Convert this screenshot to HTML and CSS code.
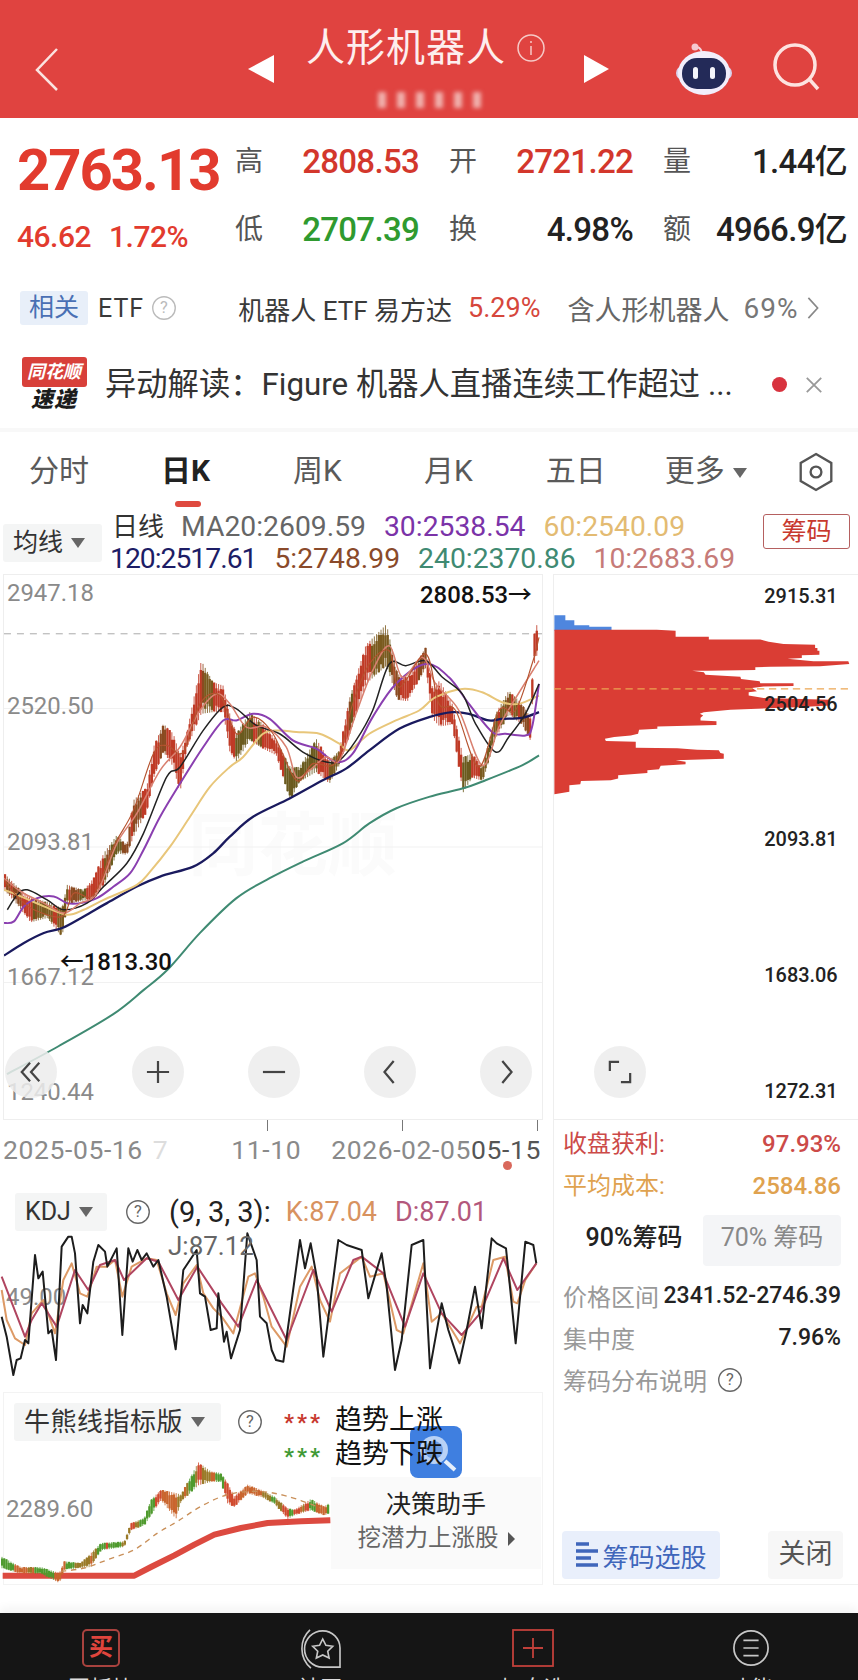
FILE: index.html
```html
<!DOCTYPE html>
<html lang="zh-CN">
  <head>
    <meta charset="UTF-8" />
    <meta name="viewport" content="width=device-width, initial-scale=1.0" />
    <title>人形机器人</title>
    <link rel="stylesheet" href="styles.css">
  </head>
  <body>
    <div class="screen">
      <header class="topbar">
        <svg class="back" viewBox="0 0 26 44"><path d="M23 2 3 23l20 20" /></svg>
        <span class="tri tri-left"></span>
        <div class="title-wrap">
          <div class="title-line">
            <span class="title">人形机器人</span>
            <svg class="info" viewBox="0 0 30 30"><circle cx="15" cy="15" r="13" /><path d="M15 13v9M15 8v2" /></svg>
          </div>
          <div class="blur-code"><i></i><i></i><i></i><i></i><i></i><i></i></div>
        </div>
        <span class="tri tri-right"></span>
        <svg class="robot" viewBox="0 0 60 54">
          <path class="antenna" d="M28 13c0-4-1-7-5-8" />
          <circle class="antenna-dot" cx="21" cy="5" r="3.5" />
          <rect class="ear" x="2" y="24" width="56" height="14" rx="7" />
          <ellipse class="head" cx="30" cy="31" rx="26" ry="22" />
          <rect class="visor" x="8" y="16" width="44" height="31" rx="15" />
          <rect class="eye" x="19" y="25" width="5" height="12" rx="2.5" />
          <rect class="eye" x="36" y="25" width="5" height="12" rx="2.5" />
        </svg>
        <svg class="search" viewBox="0 0 50 50"><circle cx="23" cy="23" r="20" /><path d="m38 38 8 9" /></svg>
      </header>

      <section class="quote">
        <div class="quote-price">
          <div class="price-big">2763.13</div>
          <div class="price-change"><span>46.62</span><span>1.72%</span></div>
        </div>
        <div class="quote-grid">
          <div class="cell"><span class="cell-label">高</span><span class="up">2808.53</span></div>
          <div class="cell"><span class="cell-label">开</span><span class="up">2721.22</span></div>
          <div class="cell"><span class="cell-label">量</span><span>1.44亿</span></div>
          <div class="cell"><span class="cell-label">低</span><span class="down">2707.39</span></div>
          <div class="cell"><span class="cell-label">换</span><span>4.98%</span></div>
          <div class="cell"><span class="cell-label">额</span><span>4966.9亿</span></div>
        </div>
      </section>

      <section class="etf-row">
        <span class="etf-tag">相关</span>
        <span class="etf-name">ETF</span>
        <svg class="help help-light" viewBox="0 0 30 30"><circle cx="15" cy="15" r="13" /><text x="15" y="21">?</text></svg>
        <span class="etf-fund">机器人 ETF 易方达</span>
        <span class="etf-pct">5.29%</span>
        <span class="etf-hold">含人形机器人</span>
        <span class="etf-hold-pct">69%</span>
        <svg class="etf-more" viewBox="0 0 14 26"><path d="m2 2 10 11L2 24" /></svg>
      </section>

      <section class="news-row">
        <div class="news-logo">
          <span class="logo-top">同花顺</span>
          <span class="logo-bottom">速递</span>
        </div>
        <p class="news-text">异动解读：Figure 机器人直播连续工作超过 ...</p>
        <span class="news-dot"></span>
        <svg class="news-close" viewBox="0 0 20 20"><path d="m2 2 16 16M18 2 2 18" /></svg>
      </section>

      <nav class="tabs">
        <span class="tab tab-1">分时</span>
        <span class="tab tab-2 tab-active">日K</span>
        <span class="tab tab-3">周K</span>
        <span class="tab tab-4">月K</span>
        <span class="tab tab-5">五日</span>
        <span class="tab tab-6">更多<i class="caret"></i></span>
        <svg class="hex" viewBox="0 0 40 44"><path d="M20 2 37 12v20L20 42 3 32V12z" /><circle cx="20" cy="22" r="6" /></svg>
      </nav>

      <section class="ma-row">
        <div class="select ma-select">均线<i class="caret"></i></div>
        <div class="ma-lines">
          <div class="ma-line">
            <span class="ma-day">日线</span>
            <span class="ma-20">MA20:2609.59</span>
            <span class="ma-30">30:2538.54</span>
            <span class="ma-60">60:2540.09</span>
          </div>
          <div class="ma-line ma-line-2">
            <span class="ma-120">120:2517.61</span>
            <span class="ma-5">5:2748.99</span>
            <span class="ma-240">240:2370.86</span>
            <span class="ma-10">10:2683.69</span>
          </div>
        </div>
        <span class="chip-btn">筹码</span>
      </section>

      <main class="charts">
        <div class="charts-left">
          <div class="kline-pane">
            <svg class="kline-svg" viewBox="0 574 540 546">
              <text class="wm" x="185" y="870">同花顺</text>
              <path class="grid-line" d="M0 708H540M0 847H540M0 983H540" />
              <path class="dash-line" d="M0 633H540" />
              <text class="axis" x="3" y="600">2947.18</text>
              <text class="axis" x="3" y="714">2520.50</text>
              <text class="axis" x="3" y="850">2093.81</text>
              <text class="axis" x="3" y="986">1667.12</text>
              <text class="axis" x="3" y="1101">1240.44</text>
              <g id="kline" transform="translate(0,570) scale(.33333)"></g>
              <text class="mark" x="530" y="602" text-anchor="end">2808.53→</text>
              <text class="mark" x="56" y="970">←1813.30</text>
            </svg>
            <div class="zoom-btns">
              <span class="zoom-btn"><svg viewBox="0 0 26 26"><path d="M12 3 3 13l9 10M22 3l-9 10 9 10" /></svg></span>
              <span class="zoom-btn"><svg viewBox="0 0 26 26"><path d="M13 1v24M1 13h24" /></svg></span>
              <span class="zoom-btn"><svg viewBox="0 0 26 26"><path d="M1 13h24" /></svg></span>
              <span class="zoom-btn"><svg viewBox="0 0 26 26"><path d="M17 1 7 13l10 12" /></svg></span>
              <span class="zoom-btn"><svg viewBox="0 0 26 26"><path d="m9 1 10 12L9 25" /></svg></span>
            </div>
          </div>

          <div class="dates">
            <div class="ticks"><i></i><i></i><i></i></div>
            <div class="date-labels">
              <span class="d-1">2025-05-16</span>
              <span class="d-2">7</span>
              <span class="d-3">11-10</span>
              <span class="d-4">2026-02-05</span>
              <span class="d-5">05-15</span>
            </div>
            <i class="date-dot"></i>
          </div>

          <div class="kdj-pane">
            <svg class="pane-svg" viewBox="0 1180 540 210">
              <path class="grid-line" d="M0 1302H540" />
              <text class="axis" x="6" y="1305">49.00</text>
              <g id="kdj" transform="translate(0,1190) scale(.33333)"></g>
              <text class="kdj-j" x="168" y="1255">J:87.12</text>
            </svg>
            <div class="pane-head">
              <div class="select kdj-select">KDJ<i class="caret"></i></div>
              <svg class="help" viewBox="0 0 30 30"><circle cx="15" cy="15" r="13" /><text x="15" y="21">?</text></svg>
              <span class="kdj-vals">(9, 3, 3):</span>
              <span class="kdj-k">K:87.04</span>
              <span class="kdj-d">D:87.01</span>
            </div>
          </div>

          <div class="bull-pane">
            <svg class="pane-svg" viewBox="0 1390 540 195">
              <text class="axis" x="5" y="1514">2289.60</text>
              <g id="bull" transform="translate(0,1390) scale(.33333)"></g>
            </svg>
            <div class="helper">
              <div class="helper-title">决策助手</div>
              <div class="helper-sub">挖潜力上涨股<i class="helper-arrow"></i></div>
            </div>
            <svg class="helper-icon" viewBox="0 0 52 52">
              <rect width="52" height="52" rx="8" />
              <circle cx="24" cy="24" r="14" />
              <circle class="lens-in" cx="24" cy="24" r="9" />
              <path d="m35 35 10 9" />
            </svg>
            <div class="pane-head bull-head">
              <div class="select bull-select">牛熊线指标版<i class="caret"></i></div>
              <svg class="help" viewBox="0 0 30 30"><circle cx="15" cy="15" r="13" /><text x="15" y="21">?</text></svg>
              <div class="trend">
                <div class="trend-line"><span class="stars stars-up">***</span>趋势上涨</div>
                <div class="trend-line"><span class="stars stars-down">***</span>趋势下跌</div>
              </div>
            </div>
          </div>
        </div>

        <aside class="charts-right">
          <div class="chip-pane">
            <svg class="chip-svg" viewBox="553 574 305 546">
              <g id="chips" transform="translate(530,570) scale(.33333)"></g>
              <text class="chip-axis" x="764" y="602">2915.31</text>
              <text class="chip-axis" x="764" y="711">2504.56</text>
              <text class="chip-axis" x="764" y="846">2093.81</text>
              <text class="chip-axis" x="764" y="983">1683.06</text>
              <text class="chip-axis" x="764" y="1099">1272.31</text>
            </svg>
            <span class="zoom-btn chip-zoom"><svg viewBox="0 0 26 26"><path d="M12 2H2v10M14 24h10V14" /></svg></span>
          </div>

          <div class="stat stat-profit"><span>收盘获利:</span><b>97.93%</b></div>
          <div class="stat stat-cost"><span>平均成本:</span><b>2584.86</b></div>

          <div class="pct-tabs">
            <span class="pct-tab pct-on">90%筹码</span>
            <span class="pct-tab">70% 筹码</span>
          </div>

          <div class="info-row"><span>价格区间</span><b>2341.52-2746.39</b></div>
          <div class="info-row"><span>集中度</span><b>7.96%</b></div>
          <div class="info-row info-help">
            <span>筹码分布说明</span>
            <svg class="help" viewBox="0 0 30 30"><circle cx="15" cy="15" r="13" /><text x="15" y="21">?</text></svg>
          </div>

          <div class="chip-actions">
            <span class="pick-btn">
              <svg viewBox="0 0 24 28"><path d="M1 3h13M1 10h22M1 17h15M1 24h22" /></svg>
              筹码选股
            </span>
            <span class="close-btn">关闭</span>
          </div>
        </aside>
      </main>

      <footer class="bottom-nav">
        <div class="nav-item nav-buy">
          <span class="buy-icon">买</span>
          <span class="nav-label">同板块</span>
        </div>
        <div class="nav-item nav-star">
          <svg class="nav-icon star-icon" viewBox="0 0 48 44">
            <path d="M27 2a19 19 0 0 1 19 19v21H27a20 20 0 0 1 0-40z" />
            <path d="M13 1C1 12 1 32 14 43" />
            <path d="m27 11 3.500 7 7.500 1-5.500 5.500 1.500 7.500-7-3.500-7 3.500 1.500-7.500-5.500-5.500 7.500-1z" />
          </svg>
          <span class="nav-label">社区</span>
        </div>
        <div class="nav-item nav-add">
          <svg class="nav-icon add-icon" viewBox="0 0 42 38"><rect x="1" y="1" width="40" height="36" /><path d="M21 9v20M11 19h20" /></svg>
          <span class="nav-label">加自选</span>
        </div>
        <div class="nav-item nav-more">
          <svg class="nav-icon" viewBox="0 0 40 40"><circle cx="20" cy="20" r="18" /><path d="M12 12h16M12 20h16M12 28h16" /></svg>
          <span class="nav-label">功能</span>
        </div>
      </footer>
    </div>
    <script src="chart.js"></script>
  </body>
</html>
```

FILE: styles.css
```css
* {
  box-sizing: border-box;
}

html,
body {
  margin: 0;
  padding: 0;
  background: #fff;
}

body {
  font-family: Roboto, "Noto Sans CJK SC", sans-serif;
  color: #222;
}

.screen {
  width: 858px;
  height: 1680px;
  overflow: hidden;
  display: flex;
  flex-direction: column;
}

/* top bar */
.topbar {
  height: 118px;
  flex: none;
  background: #e04340;
  color: #fdeeee;
  display: flex;
  align-items: flex-start;
  position: relative;
}

.back {
  width: 26px;
  height: 44px;
  margin: 47px 0 0 34px;
  fill: none;
  stroke: #fbe3e0;
  stroke-width: 2.5;
}

.tri {
  width: 0;
  height: 0;
  margin-top: 55px;
  border-top: 14px solid transparent;
  border-bottom: 14px solid transparent;
}

.tri-left {
  margin-left: 188px;
  border-right: 26px solid #fff;
}

.tri-right {
  margin-left: 0;
  border-left: 25px solid #fff;
}

.title-wrap {
  width: 310px;
  padding-left: 32px;
}

.title-line {
  display: flex;
  align-items: center;
  gap: 10px;
  margin-top: 21px;
  height: 54px;
}

.title {
  font-size: 39px;
  line-height: 54px;
  color: #fdeeee;
  letter-spacing: 1px;
}

.info {
  width: 30px;
  height: 30px;
  fill: none;
  stroke: #f6c9c6;
  stroke-width: 1.5;
}

.blur-code {
  display: flex;
  gap: 11px;
  margin: 17px 0 0 72px;
  height: 18px;
  filter: blur(2px);
}

.blur-code i {
  width: 8px;
  height: 16px;
  background: #f0b0ac;
}

.robot {
  width: 60px;
  height: 54px;
  margin: 42px 0 0 65px;
}

.antenna {
  fill: none;
  stroke: #f3d6dc;
  stroke-width: 2;
}

.antenna-dot {
  fill: #f5c9cf;
}

.ear {
  fill: #d9d4ee;
}

.head {
  fill: #f2eefb;
}

.visor {
  fill: #232a58;
}

.eye {
  fill: #f4f4fb;
}

.search {
  width: 50px;
  height: 50px;
  margin: 42px 0 0 38px;
  fill: none;
  stroke: #fde3e0;
  stroke-width: 3.5;
}

/* quote block */
.quote {
  height: 158px;
  flex: none;
  display: flex;
  align-items: flex-start;
  padding: 20px 0 0 17px;
  font-weight: 500;
}

.quote-price {
  width: 218px;
  flex: none;
  color: #e23b2e;
}

.price-big {
  font-size: 58px;
  line-height: 64px;
  font-weight: 700;
  letter-spacing: -2px;
}

.price-change {
  display: flex;
  gap: 18px;
  margin-top: 18px;
  font-size: 30px;
  line-height: 34px;
  letter-spacing: -0.5px;
}

.quote-grid {
  display: grid;
  grid-template-columns: repeat(3, 184px);
  column-gap: 30px;
  row-gap: 20px;
  font-size: 33px;
  line-height: 48px;
  letter-spacing: -0.7px;
  padding-top: 0;
}

.cell {
  display: flex;
  justify-content: space-between;
  white-space: nowrap;
}

.cell-label {
  font-size: 28px;
  font-weight: 400;
  letter-spacing: 0;
  color: #555;
}

.up {
  color: #d3372c;
}

.down {
  color: #2f9a2f;
}

/* etf row */
.etf-row {
  height: 46px;
  flex: none;
  margin-top: 9px;
  padding-left: 20px;
  display: flex;
  align-items: center;
  font-size: 25px;
  color: #3a3a3a;
  white-space: nowrap;
}

.etf-tag {
  width: 68px;
  height: 34px;
  background: #e8eff9;
  border-radius: 3px;
  color: #4a70b4;
  text-align: center;
  line-height: 34px;
  font-size: 25px;
}

.etf-name {
  margin-left: 10px;
  letter-spacing: 1px;
}

.help {
  width: 26px;
  height: 26px;
  flex: none;
  fill: none;
  stroke: #666;
  stroke-width: 1.6;
}

.help text {
  fill: #666;
  stroke: none;
  font-size: 19px;
  text-anchor: middle;
}

.help-light {
  margin-left: 7px;
  stroke: #bbb;
}

.help-light text {
  fill: #bbb;
}

.etf-fund {
  margin-left: 61px;
  font-size: 26px;
}

.etf-pct {
  margin-left: 16px;
  font-size: 27px;
  color: #d6473c;
}

.etf-hold {
  margin-left: 27px;
  font-size: 27px;
  color: #666;
}

.etf-hold-pct {
  margin-left: 14px;
  font-size: 28px;
  letter-spacing: 1px;
  color: #777;
}

.etf-more {
  width: 14px;
  height: 24px;
  margin-left: 8px;
  fill: none;
  stroke: #888;
  stroke-width: 1.8;
}

/* news row */
.news-row {
  height: 85px;
  flex: none;
  margin-top: 16px;
  padding: 0 0 6px 21px;
  display: flex;
  align-items: center;
  border-bottom: 4px solid #f8f8f8;
}

.news-logo {
  width: 66px;
  flex: none;
  display: flex;
  flex-direction: column;
  align-items: center;
}

.logo-top {
  width: 65px;
  height: 30px;
  background: #d8403a;
  border-radius: 3px;
  color: #fff;
  font-size: 18px;
  line-height: 30px;
  font-weight: 700;
  font-style: italic;
  text-align: center;
}

.logo-bottom {
  margin-top: 1px;
  font-size: 22px;
  line-height: 24px;
  font-weight: 900;
  font-style: italic;
  color: #1c1c1c;
  letter-spacing: 1px;
}

.news-text {
  margin: 0 0 0 18px;
  width: 667px;
  flex: none;
  font-size: 31.300px;
  line-height: 40px;
  color: #333;
  white-space: nowrap;
}

.news-dot {
  width: 15px;
  height: 15px;
  border-radius: 50%;
  background: #d8333f;
  flex: none;
}

.news-close {
  width: 18px;
  height: 18px;
  margin-left: 18px;
  fill: none;
  stroke: #999;
  stroke-width: 2;
}

/* tabs */
.tabs {
  height: 88px;
  flex: none;
  margin-top: 6px;
  padding-top: 8px;
  display: flex;
  font-size: 30px;
  line-height: 50px;
  color: #5a5a5a;
  position: relative;
}

.tab {
  white-space: nowrap;
}

.tab-1 {
  margin-left: 29px;
}

.tab-2 {
  margin-left: 72px;
}

.tab-3 {
  margin-left: 83px;
}

.tab-4 {
  margin-left: 82px;
}

.tab-5 {
  margin-left: 73px;
}

.tab-6 {
  margin-left: 59px;
}

.tab-active {
  color: #222;
  font-weight: 700;
}

.tab-active::after {
  content: "";
  position: absolute;
  left: 175px;
  top: 63px;
  width: 26px;
  height: 6px;
  border-radius: 3px;
  background: #df4a3f;
}

.hex {
  width: 36px;
  height: 40px;
  margin: 6px 0 0 51px;
  fill: none;
  stroke: #555;
  stroke-width: 2.6;
}

.caret {
  display: inline-block;
  width: 0;
  height: 0;
  margin-left: 8px;
  vertical-align: middle;
  border-left: 7px solid transparent;
  border-right: 7px solid transparent;
  border-top: 10px solid #666;
}

/* ma row */
.ma-row {
  height: 60px;
  flex: none;
  display: flex;
  font-size: 28.300px;
  line-height: 32px;
  white-space: nowrap;
  margin-top: -15px;
}

.select {
  background: #f4f5f5;
  border-radius: 3px;
  color: #333;
  display: flex;
  align-items: center;
}

.ma-select {
  width: 99px;
  height: 38px;
  margin: 13px 0 0 3px;
  padding-left: 10px;
  font-size: 25px;
}

.ma-lines {
  margin-left: 10px;
  width: 650px;
}

.ma-line {
  display: flex;
  height: 32px;
}

.ma-line-2 {
  margin-left: -2px;
}

.ma-line span {
  margin-right: 18px;
}

.ma-line .ma-day {
  color: #333;
  margin-right: 17px;
  font-size: 26px;
}

.ma-20 {
  color: #666;
}

.ma-30 {
  color: #7b33a8;
}

.ma-60 {
  color: #e3bb72;
}

.ma-120 {
  color: #1d1d66;
  letter-spacing: -1px;
}

.ma-5 {
  color: #8a4a2a;
}

.ma-240 {
  color: #3f8a72;
}

.ma-10 {
  color: #c67b78;
}

.chip-btn {
  width: 87px;
  height: 35px;
  margin: 3px 0 0 1px;
  border: 1px solid #b56060;
  border-radius: 3px;
  color: #c8392e;
  text-align: center;
  line-height: 33px;
  font-size: 25px;
}

/* chart columns */
.charts {
  height: 1013px;
  flex: none;
  display: grid;
  grid-template-columns: 553px 305px;
  margin-top: 3px;
}

.charts-left {
  display: flex;
  flex-direction: column;
}

.charts svg text {
  font-family: Roboto, "Noto Sans CJK SC", sans-serif;
}

.kline-pane {
  width: 540px;
  height: 546px;
  margin-left: 3px;
  border: 1px solid #eee;
  position: relative;
  flex: none;
}

.kline-svg,
.chip-svg {
  display: block;
  width: 100%;
  height: 100%;
}

.grid-line {
  stroke: #f1f1f1;
  stroke-width: 1;
  fill: none;
}

.dash-line {
  stroke: #aaa;
  stroke-width: 1;
  stroke-dasharray: 7 6;
  fill: none;
}

.axis {
  font-size: 24px;
  fill: #8a8a8a;
}

.mark {
  font-size: 24px;
  font-weight: 500;
  fill: #111;
}

.wm {
  font-size: 70px;
  font-weight: 700;
  fill: #fbfbfb;
}

.zoom-btns {
  position: absolute;
  left: 1px;
  top: 471px;
  display: flex;
  gap: 64px;
}

.zoom-btns .zoom-btn:first-child {
  margin-right: 11px;
}

.zoom-btn {
  width: 52px;
  height: 52px;
  border-radius: 50%;
  background: rgba(236, 236, 236, 0.85);
  display: flex;
  align-items: center;
  justify-content: center;
}

.zoom-btn svg {
  width: 24px;
  height: 24px;
  fill: none;
  stroke: #444;
  stroke-width: 2.4;
}

/* dates */
.dates {
  height: 73px;
  flex: none;
  position: relative;
}

.ticks i {
  position: absolute;
  top: 0;
  width: 1px;
  height: 11px;
  background: #777;
}

.ticks i:nth-child(1) {
  left: 267px;
}

.ticks i:nth-child(2) {
  left: 402px;
}

.ticks i:nth-child(3) {
  left: 537px;
}

.date-labels {
  display: flex;
  padding: 14px 0 0 3px;
  font-size: 26.500px;
  line-height: 32px;
  letter-spacing: 0.6px;
  color: #8a8a8a;
  white-space: nowrap;
}

.d-2 {
  margin-left: 10px;
  color: #ddd;
}

.d-3 {
  margin-left: 63px;
}

.d-4 {
  margin-left: 30px;
}

.d-5 {
  color: #555;
}

.date-dot {
  position: absolute;
  left: 503px;
  top: 41px;
  width: 9px;
  height: 9px;
  border-radius: 50%;
  background: #d9685c;
}

/* kdj and bull panes */
.kdj-pane {
  height: 199px;
  flex: none;
  position: relative;
  margin-left: 3px;
}

.bull-pane {
  height: 193px;
  flex: none;
  position: relative;
  margin-left: 3px;
  width: 540px;
  border: 1px solid #f3f3f3;
}

.pane-svg {
  position: absolute;
  left: -3px;
  top: 0;
  width: 540px;
  height: 195px;
}

.kdj-pane .pane-svg {
  top: -13px;
  height: 210px;
}

.pane-head {
  position: relative;
  display: flex;
  align-items: center;
  font-size: 27px;
  line-height: 38px;
  white-space: nowrap;
  height: 38px;
}

.kdj-select {
  width: 92px;
  height: 38px;
  margin-left: 12px;
  padding-left: 10px;
  font-size: 25px;
}

.kdj-pane .help {
  margin-left: 18px;
}

.kdj-vals {
  margin-left: 18px;
  font-size: 29px;
}

.kdj-k {
  margin-left: 15px;
  color: #d8925f;
}

.kdj-d {
  margin-left: 18px;
  color: #b3587c;
}

.kdj-j {
  font-size: 26px;
  fill: #666;
}

.bull-head {
  margin-top: 10px;
  align-items: flex-start;
}

.bull-select {
  width: 207px;
  height: 38px;
  margin-left: 10px;
  padding-left: 10px;
  font-size: 26px;
  letter-spacing: 0.5px;
}

.bull-head .help {
  margin: 6px 0 0 16px;
}

.trend {
  margin-left: 21px;
  font-size: 27px;
  line-height: 34px;
  color: #111;
}

.trend-line {
  display: flex;
  align-items: center;
  height: 34px;
}

.stars {
  width: 51px;
  font-size: 22px;
  font-weight: 700;
  letter-spacing: 3px;
  line-height: 20px;
  padding-top: 6px;
}

.stars-up {
  color: #c8392e;
}

.stars-down {
  color: #3f9a35;
}

.helper {
  position: absolute;
  left: 327px;
  top: 84px;
  width: 210px;
  height: 92px;
  background: #fafafa;
  text-align: center;
}

.helper-title {
  padding-top: 10px;
  font-size: 25px;
  line-height: 36px;
  color: #222;
}

.helper-sub {
  font-size: 23.500px;
  line-height: 31px;
  color: #666;
  white-space: nowrap;
}

.helper-arrow {
  display: inline-block;
  width: 0;
  height: 0;
  margin-left: 9px;
  border-top: 7px solid transparent;
  border-bottom: 7px solid transparent;
  border-left: 7px solid #555;
}

.helper-icon {
  position: absolute;
  left: 406px;
  top: 33px;
  width: 52px;
  height: 52px;
  fill: #3f7fe0;
}

.helper-icon circle {
  fill: #c6dbf8;
  opacity: 0.9;
}

.helper-icon .lens-in {
  fill: #6a9ae0;
}

.helper-icon path {
  stroke: #e6effb;
  stroke-width: 4;
  fill: none;
}

/* chip panel */
.charts-right {
  display: flex;
  flex-direction: column;
  height: 1011px;
  border-bottom: 1px solid #f0f0f0;
  border-left: 1px solid #eee;
}

.chip-pane {
  height: 546px;
  flex: none;
  position: relative;
  border-top: 1px solid #eee;
  border-bottom: 1px solid #eee;
}

.chip-svg .chip-axis {
  font-size: 20px;
  font-weight: 500;
  fill: #222;
}

.chip-zoom {
  position: absolute;
  left: 40px;
  top: 471px;
}

.stat {
  display: flex;
  justify-content: space-between;
  padding: 0 17px 0 9px;
  font-size: 24px;
  line-height: 36px;
  height: 42px;
  white-space: nowrap;
}

.stat b {
  font-weight: 500;
  font-size: 24px;
}

.stat-profit {
  margin-top: 6px;
  color: #cc4a48;
}

.stat-cost {
  color: #dfa24f;
}

.pct-tabs {
  display: flex;
  margin: 5px 17px 0 11px;
  height: 51px;
  font-size: 25px;
  line-height: 46px;
  text-align: center;
  color: #888;
  white-space: nowrap;
}

.pct-tab {
  flex: 1;
  background: #f4f5f7;
  border-radius: 4px;
}

.pct-on {
  background: #fff;
  color: #222;
  font-weight: 500;
}

.info-row {
  display: flex;
  justify-content: space-between;
  align-items: center;
  padding: 0 17px 0 9px;
  height: 41px;
  margin-bottom: 1px;
  font-size: 24px;
  color: #999;
  white-space: nowrap;
}

.info-row b {
  color: #222;
  font-weight: 500;
  font-size: 23px;
}

.pct-tabs + .info-row {
  margin-top: 9px;
}

.info-help {
  justify-content: flex-start;
  gap: 10px;
}

.chip-actions {
  display: flex;
  justify-content: space-between;
  margin-top: auto;
  padding: 0 15px 5px 8px;
}

.pick-btn {
  width: 158px;
  height: 48px;
  display: flex;
  align-items: center;
  justify-content: center;
  gap: 3px;
  background: #e9effb;
  border-radius: 4px;
  color: #3f66bb;
  font-size: 26px;
  white-space: nowrap;
}

.pick-btn svg {
  width: 24px;
  height: 28px;
  fill: none;
  stroke: #3f66bb;
  stroke-width: 3.5;
}

.close-btn {
  width: 75px;
  height: 48px;
  background: #f7f7f7;
  border-radius: 4px;
  text-align: center;
  line-height: 46px;
  font-size: 27px;
  color: #555;
}

/* bottom nav */
.bottom-nav {
  height: 100px;
  flex: none;
  margin-top: 26px;
  background: #151515;
  display: grid;
  grid-template-columns: 202px 236px 190px 230px;
  box-shadow: 0 -6px 8px #f5f5f5;
}

.nav-item {
  display: flex;
  flex-direction: column;
  align-items: center;
  padding-top: 16px;
}

.nav-icon {
  width: 42px;
  height: 38px;
  fill: none;
  stroke: #c8c8c8;
  stroke-width: 1.8;
}

.star-icon {
  width: 46px;
  height: 40px;
  margin-bottom: -2px;
}

.buy-icon {
  width: 38px;
  height: 38px;
  border: 2px solid #a8423e;
  border-radius: 5px;
  color: #e0453d;
  font-size: 24px;
  line-height: 32px;
  font-weight: 700;
  text-align: center;
}

.add-icon {
  stroke: #c0403a;
}

.nav-more {
  padding-left: 16px;
}

.nav-label {
  margin-top: 7px;
  font-size: 22px;
  line-height: 30px;
  color: #ddd;
  white-space: nowrap;
}
```

FILE: chart.js
```js
// draws the chart lines and bars, coords are 3x page pixels as read off the screenshot
var NS = "http://www.w3.org/2000/svg";
var seed = 7;

function rnd() {
  seed = (seed * 16807) % 2147483647;
  return seed / 2147483647;
}

function el(parent, name, attrs) {
  var node = document.createElementNS(NS, name);
  for (var key in attrs) node.setAttribute(key, attrs[key]);
  parent.appendChild(node);
  return node;
}

function smooth(pts) {
  var d = "M" + pts[0][0] + " " + pts[0][1];
  for (var i = 0; i < pts.length - 1; i++) {
    var p0 = pts[i - 1] || pts[i];
    var p1 = pts[i];
    var p2 = pts[i + 1];
    var p3 = pts[i + 2] || p2;
    d += "C" + (p1[0] + (p2[0] - p0[0]) / 6) + " " + (p1[1] + (p2[1] - p0[1]) / 6) +
      " " + (p2[0] - (p3[0] - p1[0]) / 6) + " " + (p2[1] - (p3[1] - p1[1]) / 6) +
      " " + p2[0] + " " + p2[1];
  }
  return d;
}

function line(group, pts, color, width, curved) {
  var d = curved ? smooth(pts) : "M" + pts.join("L");
  el(group, "path", { d: d, fill: "none", stroke: color, "stroke-width": width, "stroke-linejoin": "round" });
}

function at(env, x) {
  for (var i = 0; i < env.length - 1; i++) {
    if (x <= env[i + 1][0]) {
      var t = (x - env[i][0]) / (env[i + 1][0] - env[i][0]);
      return [env[i][1] + (env[i + 1][1] - env[i][1]) * t, env[i][2] + (env[i + 1][2] - env[i][2]) * t];
    }
  }
  return [env[env.length - 1][1], env[env.length - 1][2]];
}

function candles(group, env, opts) {
  var maxX = env[env.length - 1][0];
  var color = opts.colors[0];
  for (var x = 3; x <= maxX; x += opts.step) {
    var range = at(env, x);
    var h = range[1] - range[0];
    var top = range[0] + rnd() * h * 0.25;
    var bot = range[1] - rnd() * h * 0.25;
    if (rnd() < 0.4) color = opts.colors[Math.floor(rnd() * opts.colors.length)];
    el(group, "path", { d: "M" + x + " " + range[0] + "V" + range[1], stroke: color, "stroke-width": 2.5 });
    el(group, "rect", { x: x - opts.width / 2, y: top, width: opts.width, height: Math.max(bot - top, 4), fill: color });
  }
}

var kline = document.getElementById("kline");
candles(kline, [
  [0, 910, 960], [40, 950, 1005], [80, 985, 1058], [130, 995, 1045], [175, 1015, 1102], [190, 945, 1005],
  [240, 960, 992], [270, 925, 990], [300, 850, 950], [340, 795, 850], [370, 825, 855], [390, 690, 800],
  [430, 650, 725], [450, 530, 625], [480, 460, 545], [510, 490, 590], [530, 555, 670], [550, 490, 535],
  [594, 270, 430], [630, 335, 425], [660, 345, 425], [680, 430, 545], [700, 490, 575], [740, 425, 510],
  [780, 460, 535], [820, 510, 555], [862, 590, 690], [890, 590, 635], [940, 505, 605], [980, 570, 640],
  [1010, 540, 585], [1040, 385, 495], [1090, 222, 340], [1152, 160, 285], [1185, 310, 388], [1215, 320, 392],
  [1270, 230, 292], [1290, 350, 445], [1312, 330, 468], [1350, 400, 462], [1382, 560, 668], [1410, 550, 622],
  [1442, 590, 632], [1480, 430, 505], [1520, 360, 432], [1560, 400, 462], [1585, 440, 510], [1598, 180, 270],
  [1611, 145, 240]
], { step: 6.7, width: 7, colors: ["#bf3a26", "#bf3a26", "#7a5a1e", "#8a4a20", "#6a5a1e"] });

line(kline, [[0, 1158], [60, 1120], [120, 1090], [175, 1075], [240, 1040], [310, 1000], [400, 950], [470, 920], [570, 890], [630, 850], [680, 800], [750, 740], [860, 685], [960, 630], [1030, 595], [1100, 540], [1190, 475], [1280, 440], [1350, 425], [1400, 430], [1460, 450], [1500, 445], [1560, 442], [1611, 425]], "#1a1a5e", 7, true);
line(kline, [[9, 1515], [164, 1431], [328, 1335], [420, 1262], [493, 1200], [591, 1089], [700, 985], [800, 925], [900, 875], [1020, 820], [1100, 760], [1180, 715], [1280, 680], [1380, 655], [1450, 630], [1560, 585], [1611, 555]], "#3f8a72", 6, true);
line(kline, [[0, 960], [40, 975], [120, 1010], [190, 1035], [240, 1020], [300, 990], [400, 945], [440, 905], [500, 830], [560, 740], [620, 650], [680, 590], [720, 560], [780, 490], [830, 480], [880, 485], [950, 490], [1010, 520], [1040, 540], [1100, 490], [1180, 450], [1250, 420], [1300, 380], [1380, 355], [1440, 365], [1500, 395], [1550, 400], [1611, 375]], "#e8c67a", 6, true);
line(kline, [[0, 1060], [30, 1055], [60, 1010], [100, 985], [150, 980], [190, 1000], [230, 1000], [280, 985], [330, 950], [380, 910], [420, 840], [470, 740], [530, 640], [600, 530], [660, 450], [700, 450], [750, 430], [800, 445], [870, 510], [940, 535], [1000, 575], [1050, 550], [1110, 440], [1180, 340], [1270, 280], [1340, 320], [1400, 400], [1470, 485], [1510, 490], [1570, 495], [1590, 470], [1611, 340]], "#8a3fb0", 6, true);
line(kline, [[10, 1020], [40, 975], [70, 960], [130, 990], [180, 1020], [250, 1000], [300, 950], [370, 880], [420, 790], [490, 620], [530, 590], [600, 480], [660, 410], [700, 415], [760, 465], [830, 490], [900, 545], [970, 575], [1010, 570], [1060, 510], [1110, 420], [1160, 280], [1210, 285], [1270, 270], [1320, 320], [1380, 370], [1420, 460], [1480, 545], [1520, 500], [1570, 430], [1611, 340]], "#222", 4.500, true);
line(kline, [[0, 925], [50, 965], [120, 1000], [180, 1030], [230, 1000], [280, 970], [340, 820], [400, 730], [470, 600], [530, 530], [590, 420], [640, 370], [680, 400], [730, 470], [790, 470], [850, 530], [880, 620], [920, 600], [970, 560], [1010, 570], [1060, 430], [1110, 300], [1160, 225], [1200, 320], [1260, 260], [1300, 340], [1370, 420], [1440, 585], [1490, 470], [1530, 400], [1611, 270]], "#d98070", 4.500, true);
line(kline, [[0, 930], [40, 980], [90, 1020], [175, 1040], [210, 970], [270, 975], [330, 830], [390, 720], [450, 550], [490, 525], [540, 545], [590, 400], [650, 375], [700, 490], [750, 440], [810, 490], [880, 630], [930, 580], [1000, 575], [1050, 400], [1100, 280], [1160, 240], [1190, 350], [1270, 250], [1310, 400], [1360, 420], [1430, 590], [1490, 420], [1540, 420], [1590, 280], [1611, 200]], "#b5532f", 3.500, true);

var kdj = document.getElementById("kdj");
line(kdj, [[5, 300], [20, 390], [45, 445], [75, 465], [95, 370], [130, 330], [165, 430], [190, 270], [215, 220], [240, 310], [262, 320], [290, 230], [320, 230], [345, 210], [367, 320], [395, 230], [440, 205], [470, 210], [500, 310], [527, 375], [550, 280], [590, 225], [610, 310], [640, 355], [665, 380], [700, 430], [745, 260], [765, 250], [790, 320], [815, 410], [860, 470], [900, 290], [935, 230], [960, 330], [990, 395], [1020, 250], [1085, 200], [1110, 260], [1150, 250], [1190, 420], [1210, 430], [1270, 220], [1295, 395], [1325, 370], [1380, 460], [1430, 350], [1445, 350], [1480, 210], [1515, 200], [1540, 335], [1552, 340], [1576, 270], [1609, 220]], "#dd9a66", 6);
line(kdj, [[5, 260], [40, 350], [75, 440], [95, 390], [125, 340], [170, 410], [225, 240], [265, 300], [300, 225], [345, 210], [372, 270], [440, 205], [475, 215], [535, 330], [592, 230], [665, 340], [715, 410], [770, 270], [860, 450], [940, 240], [995, 365], [1060, 210], [1085, 200], [1150, 250], [1215, 410], [1270, 250], [1325, 370], [1385, 435], [1440, 370], [1510, 205], [1552, 300], [1609, 220]], "#b04560", 6);
line(kdj, [[5, 380], [20, 440], [40, 555], [50, 510], [62, 505], [75, 450], [85, 460], [105, 195], [115, 265], [128, 245], [145, 430], [155, 420], [168, 510], [185, 170], [205, 140], [215, 140], [225, 190], [240, 400], [248, 345], [262, 370], [280, 215], [295, 165], [315, 185], [322, 230], [350, 175], [367, 435], [385, 175], [398, 215], [412, 180], [425, 210], [440, 190], [460, 230], [475, 210], [500, 320], [527, 478], [550, 240], [590, 180], [600, 310], [615, 320], [632, 420], [650, 415], [655, 310], [672, 455], [680, 425], [693, 505], [720, 420], [742, 130], [770, 210], [780, 380], [800, 400], [815, 480], [828, 510], [850, 515], [900, 150], [915, 235], [932, 160], [950, 260], [970, 500], [1015, 150], [1040, 165], [1085, 180], [1105, 325], [1130, 240], [1145, 190], [1160, 290], [1185, 540], [1205, 450], [1235, 165], [1270, 150], [1275, 250], [1290, 535], [1325, 340], [1345, 420], [1378, 520], [1400, 420], [1425, 290], [1445, 415], [1475, 145], [1490, 160], [1518, 175], [1535, 340], [1547, 460], [1576, 155], [1600, 165], [1609, 220]], "#1d1d1d", 6);

var bull = document.getElementById("bull");
line(bull, [[5, 548], [400, 548], [450, 522], [520, 487], [580, 455], [640, 425], [720, 405], [800, 390], [900, 385], [988, 382]], "#dc4a40", 18, false);
candles(bull, [
  [0, 490, 525], [60, 522, 542], [120, 522, 542], [175, 540, 570], [190, 505, 530], [240, 510, 525], [270, 480, 522],
  [300, 450, 472], [370, 445, 462], [390, 390, 412], [430, 375, 397], [450, 320, 367], [480, 290, 322], [525, 300, 378],
  [540, 305, 327], [592, 208, 277], [630, 235, 267], [660, 240, 267], [680, 270, 332], [700, 310, 342], [740, 275, 302],
  [780, 290, 312], [820, 310, 332], [860, 345, 378], [880, 350, 367], [930, 318, 352], [970, 340, 367], [985, 330, 362]
], { step: 6.7, width: 7, colors: ["#4f9a2e", "#c9652e", "#9a7a28", "#d04a2e"] });
el(bull, "path", {
  d: smooth([[180, 535], [250, 525], [320, 500], [400, 470], [470, 420], [530, 385], [600, 340], [680, 305], [770, 295], [860, 310], [960, 345]]),
  fill: "none", stroke: "#c9905a", "stroke-width": 4, "stroke-dasharray": "16 14"
});

var chips = document.getElementById("chips");
el(chips, "polygon", { fill: "#4f86de", points: "70,180 70,133 103,133 103,148 130,148 130,163 175,163 175,168 242,168 242,180" });
el(chips, "polygon", {
  fill: "#da3d34",
  points: "70,177 378,177 435,180 435,198 535,198 535,206 690,206 715,213 760,220 855,222 855,232 862,232 862,240 868,240 868,252 815,254 815,262 772,264 810,268 850,272 955,272 958,280 870,287 720,288 675,290 675,298 530,300 485,300 520,305 525,312 630,318 632,325 688,332 690,338 790,338 790,346 700,348 665,352 680,362 655,365 655,375 700,382 900,388 900,405 800,410 600,418 520,425 508,430 518,435 510,442 510,450 558,452 558,464 380,468 380,475 325,478 322,490 300,495 250,500 222,505 225,512 315,514 315,532 440,534 500,538 565,540 570,548 580,550 580,565 435,570 465,574 465,582 390,586 385,597 350,600 350,608 262,615 262,625 240,630 150,632 148,642 115,645 115,665 70,672"
});
el(chips, "path", { d: "M68 355H958", stroke: "#eba552", "stroke-width": 4, "stroke-dasharray": "22 14", fill: "none" });
```
